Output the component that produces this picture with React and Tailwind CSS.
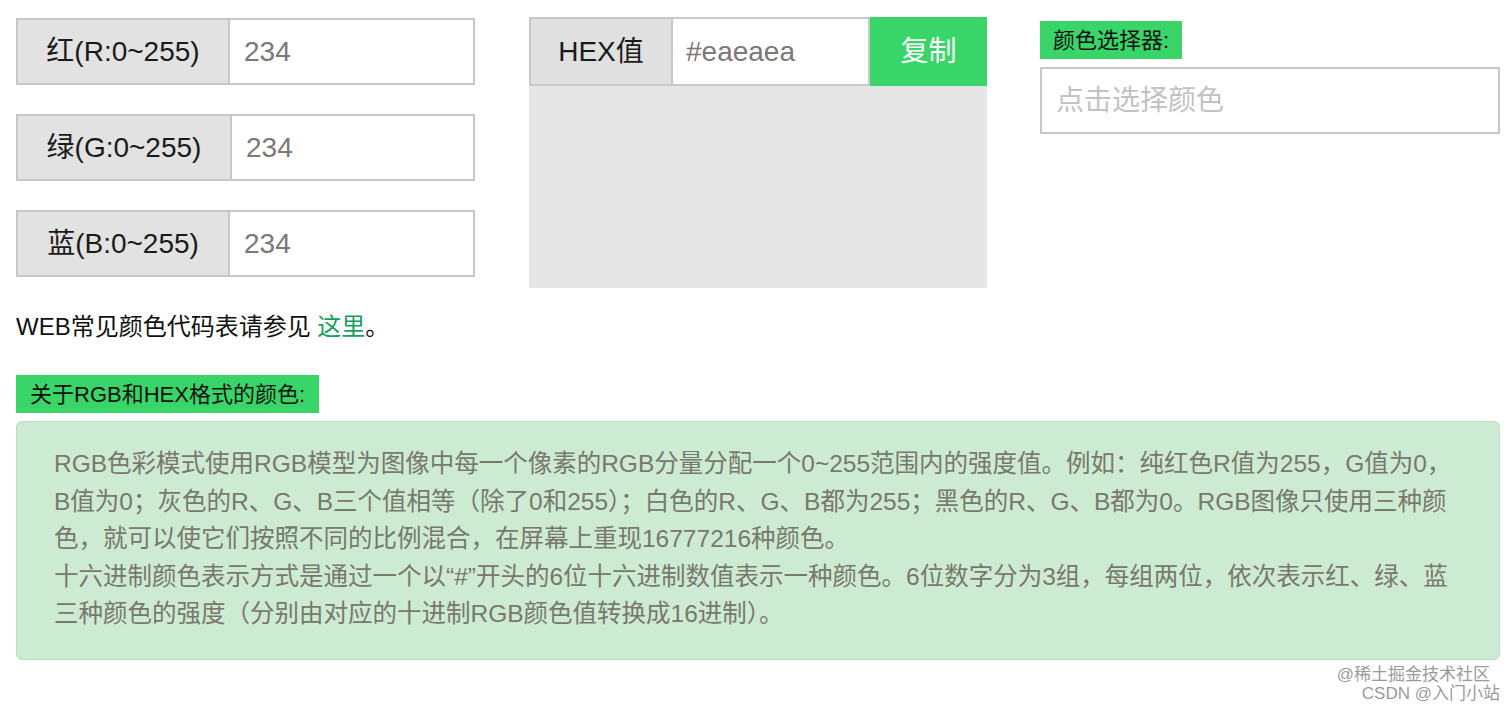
import React from "react";

const font = "font-['Liberation_Sans','Noto_Sans_CJK_SC',sans-serif]";

const rows = [
  { label: "红(R:0~255)", value: "234", w: "w-[212px]" },
  { label: "绿(G:0~255)", value: "234", w: "w-[214px]" },
  { label: "蓝(B:0~255)", value: "234", w: "w-[212px]" },
];

const RgbRow = ({ label, value, w }) => (
  <div className="flex h-[67px] border-2 border-[#c8c8c8]">
    <div
      className={`${w} flex items-center justify-center bg-[#e2e2e2] border-r-2 border-[#c8c8c8] text-[28px] text-[#1a1a1a]`}
    >
      {label}
    </div>
    <input
      readOnly
      defaultValue={value}
      className="flex-1 min-w-0 bg-white px-[14px] text-[28px] text-[#7d7775] outline-none"
    />
  </div>
);

const App = () => {
  return (
    <div className={`${font} relative min-h-[705px] bg-white pl-[16px] pr-[12px] pt-[17px]`}>
      <div className="flex items-start">
        <div className="w-[459px] flex flex-col gap-[29px] pt-[1px]">
          {rows.map((r) => (
            <RgbRow key={r.label} {...r} />
          ))}
        </div>

        <div className="ml-[54px] w-[458px] h-[271px] bg-[#e6e6e6] flex flex-col">
          <div className="flex h-[69px]">
            <div className="w-[142px] flex items-center justify-center bg-[#e0e0e0] border-2 border-r-0 border-[#c8c8c8] text-[28px] text-[#1a1a1a]">
              HEX值
            </div>
            <input
              readOnly
              defaultValue="#eaeaea"
              className="w-[199px] min-w-0 bg-white border-2 border-[#c8c8c8] px-[13px] text-[28px] text-[#7d7775] outline-none"
            />
            <button className="flex-1 bg-[#3ad568] text-white text-[28px]">
              复制
            </button>
          </div>
        </div>

        <div className="ml-[53px] w-[460px] pt-[4px] flex flex-col items-start gap-[8px]">
          <div className="h-[38px] px-[13px] flex items-center bg-[#3ad568] text-[22px] text-[#111]">
            颜色选择器:
          </div>
          <input
            readOnly
            placeholder="点击选择颜色"
            className="w-full h-[67px] border-2 border-[#c8c8c8] bg-white px-[14px] text-[28px] placeholder:text-[#c2c2c2] outline-none"
          />
        </div>
      </div>

      <p className="mt-[24px] text-[24px] leading-[30px] text-[#111]">
        WEB常见颜色代码表请参见 <a className="text-[#17a05d]">这里</a>。
      </p>

      <div className="mt-[33px] inline-flex h-[38px] px-[14px] items-center bg-[#3ad568] text-[22px] text-[#111]">
        关于RGB和HEX格式的颜色:
      </div>

      <div className="mt-[8px] w-[1484px] rounded-[6px] border border-[#b5e2c0] bg-[#cdebd3] px-[37px] pt-[23px] pb-[26px] text-[24.5px] leading-[37.5px] text-[#78786c] whitespace-nowrap">
        RGB色彩模式使用RGB模型为图像中每一个像素的RGB分量分配一个0~255范围内的强度值。例如：纯红色R值为255，G值为0，
        <br />
        B值为0；灰色的R、G、B三个值相等（除了0和255）；白色的R、G、B都为255；黑色的R、G、B都为0。RGB图像只使用三种颜
        <br />
        色，就可以使它们按照不同的比例混合，在屏幕上重现16777216种颜色。
        <br />
        十六进制颜色表示方式是通过一个以“#”开头的6位十六进制数值表示一种颜色。6位数字分为3组，每组两位，依次表示红、绿、蓝
        <br />
        三种颜色的强度（分别由对应的十进制RGB颜色值转换成16进制）。
      </div>

      <div className="absolute right-[12px] bottom-[2px] text-right text-[17px] leading-[19px] text-[#9a9a9a] [text-shadow:0_0_2px_#fff]">
        <div className="pr-[10px]">@稀土掘金技术社区</div>
        <div>CSDN @入门小站</div>
      </div>
    </div>
  );
};

export default App;
